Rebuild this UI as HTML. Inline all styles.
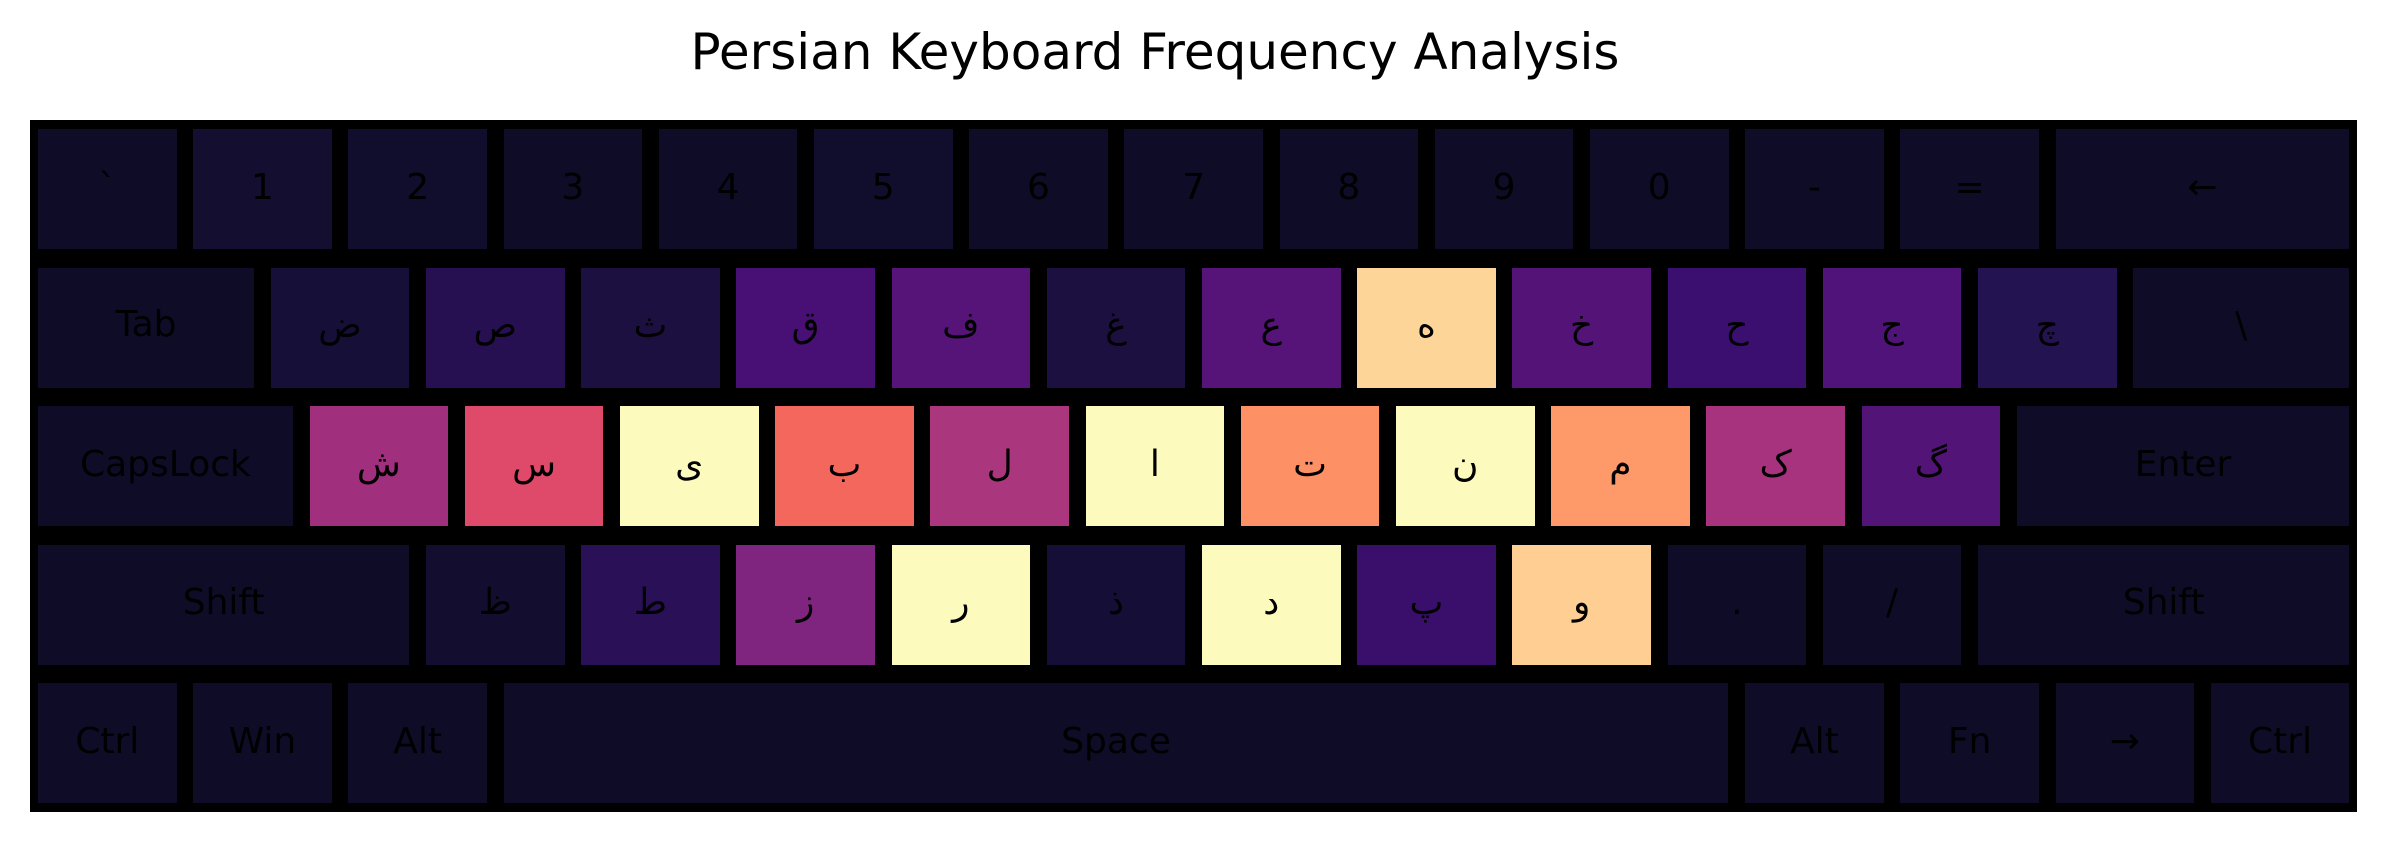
<!DOCTYPE html>
<html><head><meta charset="utf-8"><style>
html,body{margin:0;padding:0;background:#fff;width:2385px;height:843px;overflow:hidden}
body{position:relative;font-family:"DejaVu Sans","Liberation Sans",sans-serif}
#t{position:absolute;left:0;width:2310px;top:21px;text-align:center;font-size:50px;color:#000;line-height:62px}
#kb{position:absolute;left:30px;top:120px;width:2327px;height:692px;background:#000}
.k{position:absolute;height:120px;display:flex;align-items:center;justify-content:center;font-size:36px;color:#000;background:#0f0c28;box-sizing:border-box;padding-bottom:4px}
.a{top:129px}.b{top:267.5px}.c{top:406px}.d{top:544.5px}.e{top:683px}
</style></head><body>
<div id="t">Persian Keyboard Frequency Analysis</div>
<div id="kb"></div>
<!-- row1 -->
<div class="k a" style="left:38px;width:138.5px">`</div>
<div class="k a" style="left:193.2px;width:138.5px;background:#140e30">1</div>
<div class="k a" style="left:348.4px;width:138.5px;background:#110d2c">2</div>
<div class="k a" style="left:503.6px;width:138.5px">3</div>
<div class="k a" style="left:658.8px;width:138.5px">4</div>
<div class="k a" style="left:814px;width:138.5px;background:#110d2c">5</div>
<div class="k a" style="left:969.2px;width:138.5px">6</div>
<div class="k a" style="left:1124.4px;width:138.5px">7</div>
<div class="k a" style="left:1279.6px;width:138.5px">8</div>
<div class="k a" style="left:1434.8px;width:138.5px">9</div>
<div class="k a" style="left:1590px;width:138.5px">0</div>
<div class="k a" style="left:1745.2px;width:138.5px">-</div>
<div class="k a" style="left:1900.4px;width:138.5px">=</div>
<div class="k a" style="left:2055.6px;width:293.7px">←</div>
<!-- row2 -->
<div class="k b" style="left:38px;width:216.1px;align-items:flex-start;padding-top:36px">Tab</div>
<div class="k b" style="left:270.8px;width:138.5px;background:#160f38">ض</div>
<div class="k b" style="left:426px;width:138.5px;background:#261052">ص</div>
<div class="k b" style="left:581.2px;width:138.5px;background:#1c1040">ث</div>
<div class="k b" style="left:736.4px;width:138.5px;background:#481075">ق</div>
<div class="k b" style="left:891.6px;width:138.5px;background:#561478">ف</div>
<div class="k b" style="left:1046.8px;width:138.5px;background:#1b1040">غ</div>
<div class="k b" style="left:1202px;width:138.5px;background:#561478">ع</div>
<div class="k b" style="left:1357.2px;width:138.5px;background:#fed598">ه</div>
<div class="k b" style="left:1512.4px;width:138.5px;background:#541477">خ</div>
<div class="k b" style="left:1667.6px;width:138.5px;background:#3b0f6f">ح</div>
<div class="k b" style="left:1822.8px;width:138.5px;background:#4f1379">ج</div>
<div class="k b" style="left:1978px;width:138.5px;background:#231350">چ</div>
<div class="k b" style="left:2133.2px;width:216.1px">\</div>
<!-- row3 -->
<div class="k c" style="left:38px;width:254.9px">CapsLock</div>
<div class="k c" style="left:309.6px;width:138.5px;background:#a0307d">ش</div>
<div class="k c" style="left:464.8px;width:138.5px;background:#e04a6a">س</div>
<div class="k c" style="left:620px;width:138.5px;background:#fcfbbd">ی</div>
<div class="k c" style="left:775.2px;width:138.5px;background:#f4675c">ب</div>
<div class="k c" style="left:930.4px;width:138.5px;background:#aa367e">ل</div>
<div class="k c" style="left:1085.6px;width:138.5px;background:#fcfbbd">ا</div>
<div class="k c" style="left:1240.8px;width:138.5px;background:#fd9065">ت</div>
<div class="k c" style="left:1396px;width:138.5px;background:#fcfbbd">ن</div>
<div class="k c" style="left:1551.2px;width:138.5px;background:#fe9a6a">م</div>
<div class="k c" style="left:1706.4px;width:138.5px;background:#a7327e">ک</div>
<div class="k c" style="left:1861.6px;width:138.5px;background:#521477">گ</div>
<div class="k c" style="left:2016.8px;width:332.5px">Enter</div>
<!-- row4 -->
<div class="k d" style="left:38px;width:371.3px">Shift</div>
<div class="k d" style="left:426px;width:138.5px;background:#130e30">ظ</div>
<div class="k d" style="left:581.2px;width:138.5px;background:#2a1157">ط</div>
<div class="k d" style="left:736.4px;width:138.5px;background:#80257f">ز</div>
<div class="k d" style="left:891.6px;width:138.5px;background:#fcfbbd">ر</div>
<div class="k d" style="left:1046.8px;width:138.5px;background:#150e36">ذ</div>
<div class="k d" style="left:1202px;width:138.5px;background:#fcfbbd">د</div>
<div class="k d" style="left:1357.2px;width:138.5px;background:#3a0f6b">پ</div>
<div class="k d" style="left:1512.4px;width:138.5px;background:#fece92">و</div>
<div class="k d" style="left:1667.6px;width:138.5px">.</div>
<div class="k d" style="left:1822.8px;width:138.5px">/</div>
<div class="k d" style="left:1978px;width:371.3px">Shift</div>
<!-- row5 -->
<div class="k e" style="left:38px;width:138.5px">Ctrl</div>
<div class="k e" style="left:193.2px;width:138.5px">Win</div>
<div class="k e" style="left:348.4px;width:138.5px">Alt</div>
<div class="k e" style="left:503.6px;width:1224.9px">Space</div>
<div class="k e" style="left:1745.2px;width:138.5px">Alt</div>
<div class="k e" style="left:1900.4px;width:138.5px">Fn</div>
<div class="k e" style="left:2055.6px;width:138.5px">→</div>
<div class="k e" style="left:2210.8px;width:138.5px">Ctrl</div>
</body></html>
